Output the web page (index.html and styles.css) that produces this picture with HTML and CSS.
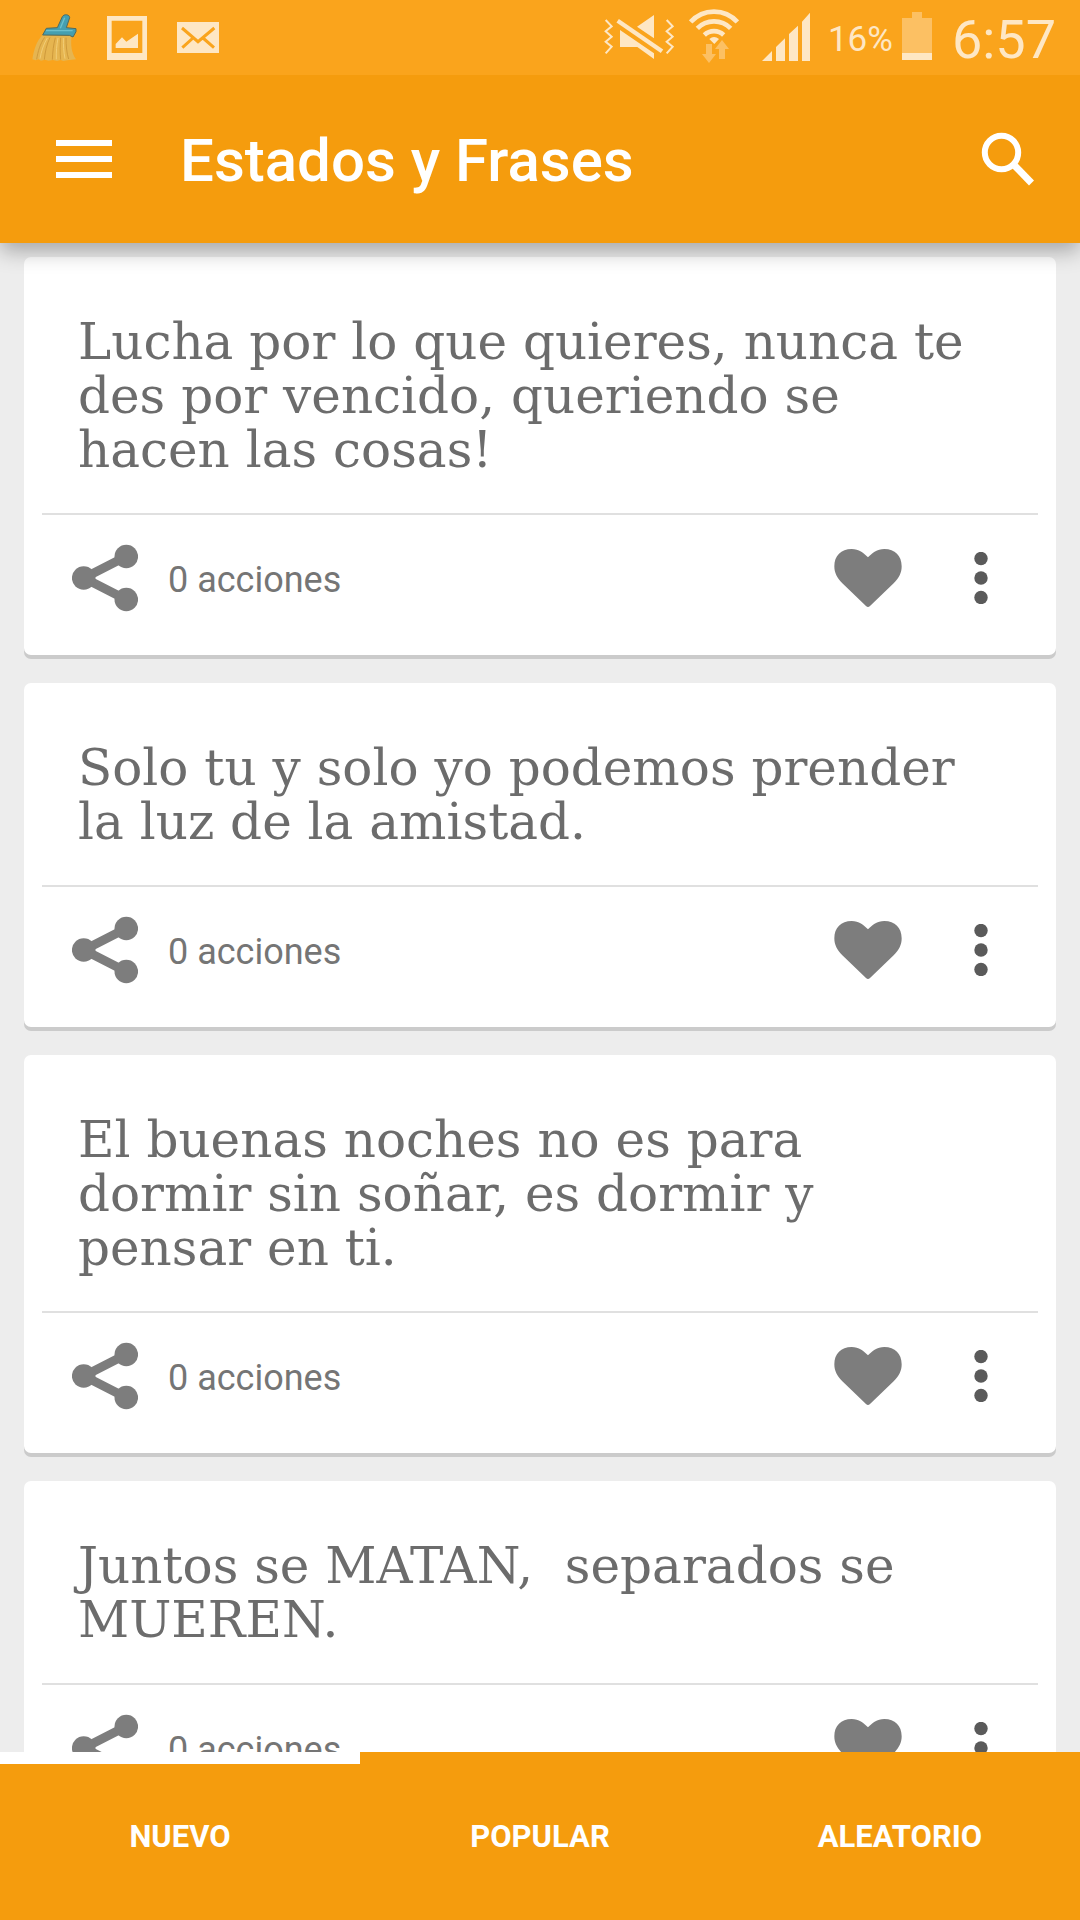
FILE: index.html
```html
<!DOCTYPE html>
<html lang="es">
<head>
<meta charset="utf-8">
<meta name="viewport" content="width=device-width, initial-scale=1">
<title>Estados y Frases</title>
<link rel="stylesheet" href="styles.css">
</head>
<body>
<svg class="sprite" aria-hidden="true">
  <symbol id="share" viewBox="0 0 66 68">
    <path d="M54 12.500 12 34 54 55.500" fill="none" stroke="currentColor" stroke-width="9"/>
    <circle cx="11.700" cy="34" r="11.800"/><circle cx="54.300" cy="12.500" r="11.800"/><circle cx="54.300" cy="55.500" r="11.800"/>
  </symbol>
  <symbol id="heart" viewBox="0 0 202 174">
    <path d="M101 174Q98 174 95 171L24 103C8 86 0 72 0 52 0 20 20 0 52 0c22 0 36 12 49 25C114 12 128 0 150 0c32 0 52 20 52 52 0 20-8 34-24 51L107 171Q104 174 101 174Z"/>
  </symbol>
  <symbol id="dots" viewBox="0 0 14 52">
    <circle cx="7" cy="6.500" r="6.700"/><circle cx="7" cy="26" r="6.700"/><circle cx="7" cy="45.500" r="6.700"/>
  </symbol>
</svg>

<div class="status">
  <div class="status-left">
    <svg width="45" height="75" viewBox="96 0 135 225" aria-hidden="true">
      <path d="M128 105C110 122 102 148 97 178l10 3 8-3 8 4 12-3 10 3 14-2 12 3 11-3 8 3 12-2 26-3c-13-18-17-44-13-70Z" fill="#e6b550"/>
      <path d="M134 112c-14 20-20 42-24 66M150 112c-10 22-15 44-17 67M166 113c-6 22-8 44-9 66M182 113c-2 22-2 44 0 66M198 113c0 24 2 46 8 64" fill="none" stroke="#cf9a3c" stroke-width="3"/>
      <path d="M142 114c-12 20-18 40-22 62M174 114c-4 22-6 42-5 64M190 114c0 22 1 42 5 62" fill="none" stroke="#f2cd76" stroke-width="3"/>
      <path d="M128 105 139 85 172 83 187 50C192 41 209 43 209 53L199 83 228 86 228 95 219 111 208 106Z" fill="#459fb0" stroke="#4e6a60" stroke-width="3"/>
      <path d="M138 92H218M194 53 181 85" fill="none" stroke="#6bc0cd" stroke-width="4"/>
    </svg>
    <svg width="40" height="75" viewBox="321 0 120 225" fill="#fee7c4" aria-hidden="true">
      <path fill-rule="evenodd" d="M321 48H441V180H321ZM335 62V159H427V62Z"/>
      <path d="M347 144v-12l19-20 13 13 35-24v43Z"/>
    </svg>
    <svg width="42" height="75" viewBox="534 0 126 225" aria-hidden="true">
      <path d="M534 66h126v93H534Z" fill="#fee7c4"/>
      <path d="M549 84 597 125 646 84M550 143 582 114M645 143 612 114" fill="none" stroke="#faa41c" stroke-width="9"/>
    </svg>
  </div>
  <div class="status-right">
    <svg width="70" height="75" viewBox="72 0 210 225" fill="#fee7c4" aria-hidden="true">
      <path d="M77 60 95 79 77 94 95 110 77 125 95 140 77 160M260 60 278 79 260 94 278 110 260 125 278 140 260 160" fill="none" stroke="#fee7c4" stroke-width="6"/>
      <path d="M113 62 246 154" stroke="#fee7c4" stroke-width="13"/>
      <path d="M222 45v70l-51-35ZM120 90 222 160v17l-50-36h-52Z"/>
    </svg>
    <svg class="wifi" width="50" height="75" viewBox="327 0 150 225" aria-hidden="true">
      <path d="M332 66A94 94 0 0 1 472 66M352 85A70 70 0 0 1 452 85M373 105A42 42 0 0 1 431 105" fill="none" stroke="#fee7c4" stroke-width="14"/>
      <path d="M388 117q14-12 29 0l-14 15Z" fill="#fee7c4"/>
      <path d="M378 132h18v30h12l-21 27-21-27h12ZM417 177v-30h-12l21-27 21 27h-12v30Z" fill="#fcc063"/>
    </svg>
    <svg class="signal" width="48" height="75" viewBox="546 0 144 225" fill="#fee7c4" aria-hidden="true">
      <path d="M546 183 576 153V183ZM588 183V141L615 115V183ZM627 183V102L654 77V183ZM666 183V65L690 38V183Z"/>
    </svg>
    <span class="percent">16%</span>
    <svg width="30" height="75" viewBox="969 0 90 225" aria-hidden="true">
      <path d="M969 54h30V36h30v18h30V160H969Z" fill="#fcc063"/><path d="M969 159h90v21h-90Z" fill="#fee7c4"/>
    </svg>
    <time class="clock">6:57</time>
  </div>
</div>

<header class="appbar">
  <button class="icon-button" aria-label="Menú">
    <svg width="56" height="38" viewBox="0 0 56 38" fill="#fff"><path d="M0 0h56v6H0ZM0 16h56v6H0ZM0 32h56v6H0Z"/></svg>
  </button>
  <h1 class="title">Estados y Frases</h1>
  <button class="icon-button" aria-label="Buscar">
    <svg width="54" height="54" viewBox="0 0 54 54" fill="none" stroke="#fff" stroke-width="6"><circle cx="20.500" cy="20.500" r="16.700"/><path d="M34 34 50.500 51" stroke-width="7"/></svg>
  </button>
</header>

<main class="feed">
  <article class="card">
    <p class="quote">Lucha por lo que quieres, nunca te des por vencido, queriendo se hacen las cosas!</p>
    <div class="actions">
      <button class="share"><svg width="66" height="68" aria-hidden="true"><use href="#share"/></svg><span class="count">0 acciones</span></button>
      <button class="like" aria-label="Me gusta"><svg width="68" height="58"><use href="#heart"/></svg></button>
      <button class="more" aria-label="Más opciones"><svg width="14" height="52"><use href="#dots"/></svg></button>
    </div>
  </article>
  <article class="card">
    <p class="quote">Solo tu y solo yo podemos prender la luz de la amistad.</p>
    <div class="actions">
      <button class="share"><svg width="66" height="68" aria-hidden="true"><use href="#share"/></svg><span class="count">0 acciones</span></button>
      <button class="like" aria-label="Me gusta"><svg width="68" height="58"><use href="#heart"/></svg></button>
      <button class="more" aria-label="Más opciones"><svg width="14" height="52"><use href="#dots"/></svg></button>
    </div>
  </article>
  <article class="card">
    <p class="quote">El buenas noches no es para dormir sin soñar, es dormir y pensar en ti.</p>
    <div class="actions">
      <button class="share"><svg width="66" height="68" aria-hidden="true"><use href="#share"/></svg><span class="count">0 acciones</span></button>
      <button class="like" aria-label="Me gusta"><svg width="68" height="58"><use href="#heart"/></svg></button>
      <button class="more" aria-label="Más opciones"><svg width="14" height="52"><use href="#dots"/></svg></button>
    </div>
  </article>
  <article class="card">
    <p class="quote">Juntos se MATAN,  separados se MUEREN.</p>
    <div class="actions">
      <button class="share"><svg width="66" height="68" aria-hidden="true"><use href="#share"/></svg><span class="count">0 acciones</span></button>
      <button class="like" aria-label="Me gusta"><svg width="68" height="58"><use href="#heart"/></svg></button>
      <button class="more" aria-label="Más opciones"><svg width="14" height="52"><use href="#dots"/></svg></button>
    </div>
  </article>
</main>

<nav class="tabs">
  <a class="tab tab-active" href="#nuevo" aria-current="page">NUEVO</a>
  <a class="tab" href="#popular">POPULAR</a>
  <a class="tab" href="#aleatorio">ALEATORIO</a>
</nav>
</body>
</html>
```
FILE: styles.css
```css
* { box-sizing: border-box; }

body {
  margin: 0;
  height: 100vh;
  display: flex;
  flex-direction: column;
  overflow: hidden;
  background: #ededed;
  font-family: Roboto, sans-serif;
}

svg { display: block; flex: none; }

.sprite { position: absolute; width: 0; height: 0; }

button {
  display: flex;
  align-items: center;
  padding: 0;
  border: 0;
  background: none;
  font: inherit;
  color: inherit;
  cursor: pointer;
}

/* Status bar */
.status {
  flex: none;
  position: relative;
  z-index: 2;
  height: 75px;
  padding: 0 24px 0 32px;
  display: flex;
  justify-content: space-between;
  background: #faa41c;
  color: #fee7c4;
}

.status-left { display: flex; gap: 30px; }
.status-right { display: flex; align-items: center; }
.wifi { margin-left: 15px; }
.signal { margin: 0 18px 0 23px; }
.percent { padding-top: 4px; margin-right: 9px; font-size: 35px; line-height: 40px; }
.clock { padding-top: 4px; margin-left: 20px; font-size: 54px; line-height: 64px; }

/* App bar */
.appbar {
  flex: none;
  position: relative;
  z-index: 1;
  height: 168px;
  padding: 0 45px 0 56px;
  display: flex;
  align-items: center;
  background: #f59c0d;
  color: #fff;
  box-shadow: 0 8px 20px rgba(0, 0, 0, 0.3);
}

.title {
  flex: 1;
  margin: 0 0 0 68px;
  padding-top: 4px;
  font-size: 60px;
  line-height: 72px;
  font-weight: 500;
}

/* Feed */
.feed {
  flex: 1;
  min-height: 0;
  overflow: hidden;
  padding: 14px 24px;
}

.card {
  margin-bottom: 28px;
  padding: 0 18px;
  border-radius: 7px;
  background: #fff;
  box-shadow: 0 4px 0 #cbcbcb;
}

.quote {
  margin: 0;
  padding: 58px 60px 36px 36px;
  border-bottom: 2px solid #e0e0e0;
  font-family: "DejaVu Serif", serif;
  font-size: 50px;
  line-height: 54px;
  color: #6c6c6c;
  white-space: pre-wrap;
}

.actions {
  height: 140px;
  padding: 0 50px 14px 30px;
  display: flex;
  align-items: center;
  color: #7d7d7d;
  fill: currentColor;
}

.share { gap: 30px; margin-right: auto; }
.count { padding-top: 4px; font-size: 36px; line-height: 42px; color: #757575; }
.more { margin-left: 72px; color: #5a5a5a; fill: currentColor; }

/* Bottom tabs */
.tabs {
  flex: none;
  height: 168px;
  display: grid;
  grid-template-columns: repeat(3, 1fr);
  background: #f59c0d;
}

.tab {
  display: flex;
  align-items: center;
  justify-content: center;
  padding-top: 2px;
  border: solid transparent;
  border-width: 12px 0;
  color: #fff;
  font-size: 31px;
  line-height: 36px;
  font-weight: 700;
  text-decoration: none;
}

.tab-active { border-top-color: #fff; }
```
